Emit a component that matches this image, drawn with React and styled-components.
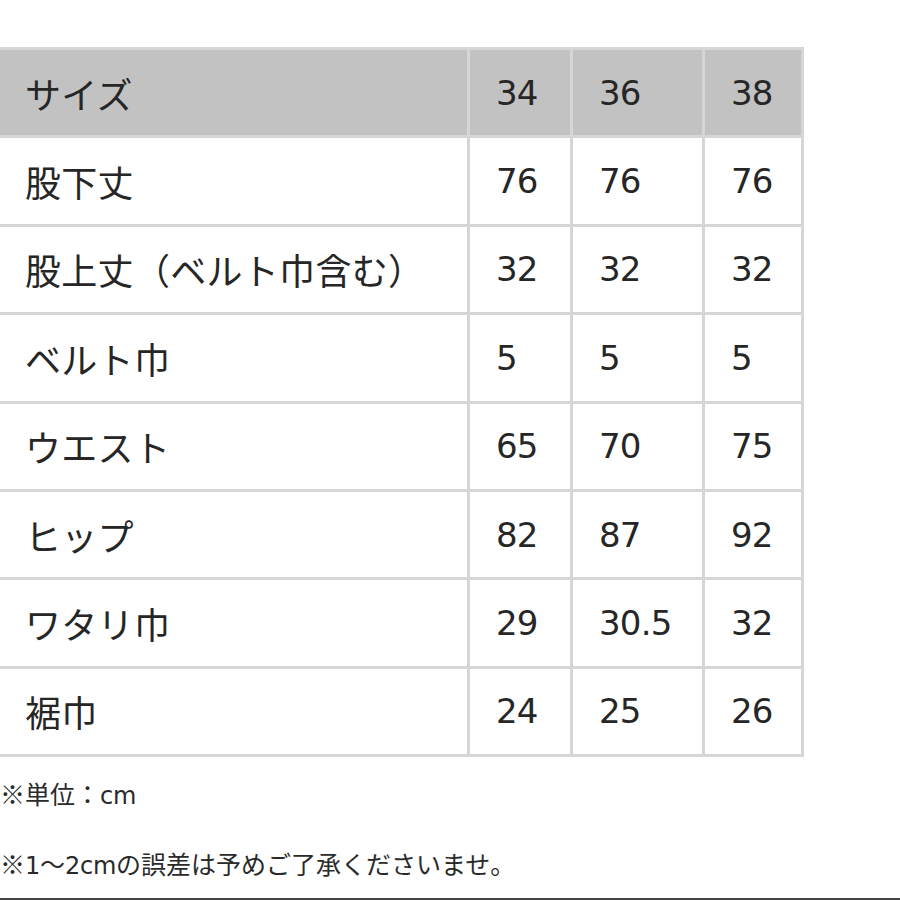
import React from "react";
import styled, { createGlobalStyle } from "styled-components";

const GlobalStyle = createGlobalStyle`
  html, body {
    margin: 0;
    padding: 0;
    background: #fff;
  }
  body {
    width: 900px;
    height: 900px;
    overflow: hidden;
    font-family: "Noto Sans CJK JP", sans-serif;
    color: #222;
  }
`;

const Page = styled.div`
  padding-top: 47px;
  display: flex;
  flex-direction: column;
  height: 900px;
  box-sizing: border-box;
`;

const Table = styled.div`
  display: grid;
  grid-template-columns: 467px 100px 129px 96px;
  grid-auto-rows: 85.4px;
  gap: 3px;
  padding: 3px 3px 3px 0;
  width: max-content;
  background: #d6d6d6;
`;

const Cell = styled.div`
  display: flex;
  align-items: center;
  padding-left: ${(p) => (p.$label ? "25px" : "26px")};
  background: ${(p) => (p.$head ? "#c2c2c2" : "#fff")};
  font-family: ${(p) =>
    p.$label
      ? '"Noto Sans CJK JP", sans-serif'
      : '"DejaVu Sans", "Noto Sans CJK JP", sans-serif'};
  font-size: ${(p) => (p.$label ? "36px" : "34px")};
  font-weight: 400;
  letter-spacing: ${(p) => (p.$label ? "0.3px" : "-0.8px")};
  color: #262626;
  white-space: nowrap;
`;

const Notes = styled.div`
  margin-top: 24px;
  display: flex;
  flex-direction: column;
  gap: 42px;
`;

const Note = styled.div`
  font-family: "Noto Sans CJK JP", sans-serif;
  font-size: 25px;
  line-height: 25px;
  color: #2a2a2a;
  white-space: nowrap;
`;

const Latin = styled.span`
  font-family: "DejaVu Sans", sans-serif;
  font-size: 24px;
  font-weight: 400;
  letter-spacing: -0.3px;
`;

const BottomRule = styled.div`
  margin-top: auto;
  height: 2px;
  background: #444;
`;

const header = ["サイズ", "34", "36", "38"];
const rows = [
  ["股下丈", "76", "76", "76"],
  ["股上丈（ベルト巾含む）", "32", "32", "32"],
  ["ベルト巾", "5", "5", "5"],
  ["ウエスト", "65", "70", "75"],
  ["ヒップ", "82", "87", "92"],
  ["ワタリ巾", "29", "30.5", "32"],
  ["裾巾", "24", "25", "26"],
];

export default function App() {
  return (
    <>
      <GlobalStyle />
      <Page>
        <Table>
          {header.map((h, i) => (
            <Cell key={"h" + i} $head $label={i === 0}>
              {h}
            </Cell>
          ))}
          {rows.map((r, ri) =>
            r.map((v, ci) => (
              <Cell key={ri + "-" + ci} $label={ci === 0}>
                {v}
              </Cell>
            ))
          )}
        </Table>
        <Notes>
          <Note>
            ※単位：<Latin>cm</Latin>
          </Note>
          <Note>
            ※<Latin>1</Latin>〜<Latin>2cm</Latin>の誤差は予めご了承くださいませ。
          </Note>
        </Notes>
        <BottomRule />
      </Page>
    </>
  );
}
